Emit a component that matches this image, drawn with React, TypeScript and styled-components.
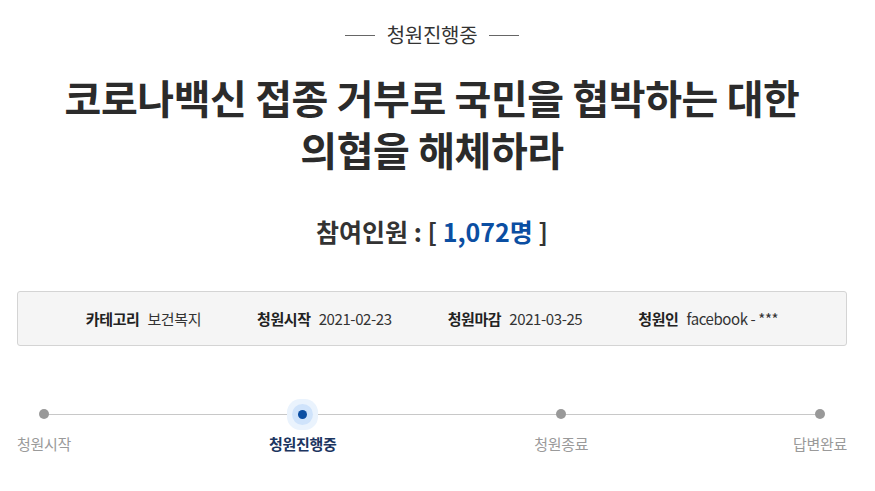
import React from "react";
import styled, { createGlobalStyle } from "styled-components";

const GlobalStyle = createGlobalStyle`
  body {
    margin: 0;
    background: #fff;
    font-family: "Noto Sans CJK KR", "Noto Sans", sans-serif;
    color: #333;
  }
`;

const Page = styled.div`
  width: 830px;
  margin-left: 17px;
  padding-top: 20px;
`;

const StatusLabel = styled.div`
  display: flex;
  justify-content: center;
  align-items: center;
  gap: 12px;
  font-size: 20px;
  line-height: 30px;
  letter-spacing: -0.3px;
  color: #333;

  &::before,
  &::after {
    content: "";
    width: 30px;
    height: 1px;
    background: #666;
  }
`;

const Title = styled.h1`
  margin: 21px 0 0;
  text-align: center;
  font-size: 40px;
  line-height: 52px;
  font-weight: 700;
  color: #2b2b2b;
  letter-spacing: -0.4px;
`;

const Count = styled.div`
  margin-top: 38px;
  text-align: center;
  font-size: 25px;
  line-height: 36px;
  font-weight: 700;
  color: #333;
`;

const CountNumber = styled.span`
  color: #0b4ea2;
`;

const InfoBox = styled.ul`
  margin: 42px 0 0;
  padding: 0;
  list-style: none;
  height: 55px;
  box-sizing: border-box;
  display: flex;
  justify-content: center;
  align-items: center;
  gap: 56px;
  background: #f5f5f5;
  border: 1px solid #d4d4d4;
  border-radius: 3px;
`;

const InfoItem = styled.li`
  display: flex;
  align-items: center;
  gap: 8px;
  font-size: 15px;
  letter-spacing: -0.4px;
  color: #333;
`;

const InfoLabel = styled.strong`
  font-weight: 700;
  color: #222;
`;

const Steps = styled.ol`
  position: relative;
  margin: 53px 0 0;
  padding: 0;
  list-style: none;
  display: flex;
  justify-content: space-between;

  &::before {
    content: "";
    position: absolute;
    top: 15px;
    left: 26px;
    right: 27px;
    height: 1px;
    background: #c8c8c8;
  }
`;

const Step = styled.li`
  width: 54px;
  display: flex;
  flex-direction: column;
  align-items: center;
  position: relative;
`;

const DotWrap = styled.div`
  width: 30px;
  height: 30px;
  display: flex;
  align-items: center;
  justify-content: center;
`;

const Dot = styled.span<{ $active?: boolean }>`
  width: ${(p) => (p.$active ? "9px" : "10px")};
  height: ${(p) => (p.$active ? "9px" : "10px")};
  border-radius: 50%;
  background: ${(p) => (p.$active ? "#0b4ea2" : "#999")};
  box-shadow: ${(p) =>
    p.$active ? "0 0 0 6px #cfe3fb, 0 0 0 11px #eaf3fd" : "none"};
`;

const StepLabel = styled.span<{ $active?: boolean }>`
  margin-top: 4px;
  white-space: nowrap;
  font-size: 15px;
  line-height: 22px;
  letter-spacing: -0.3px;
  font-weight: ${(p) => (p.$active ? 700 : 400)};
  color: ${(p) => (p.$active ? "#1c3560" : "#9a9a9a")};
`;

const info = [
  { label: "카테고리", value: "보건복지" },
  { label: "청원시작", value: "2021-02-23" },
  { label: "청원마감", value: "2021-03-25" },
  { label: "청원인", value: "facebook - ***" },
];

const steps = ["청원시작", "청원진행중", "청원종료", "답변완료"];
const current = 1;

const App = () => {
  return (
    <Page>
      <GlobalStyle />
      <StatusLabel>청원진행중</StatusLabel>
      <Title>
        코로나백신 접종 거부로 국민을 협박하는 대한
        <br />
        의협을 해체하라
      </Title>
      <Count>
        참여인원 : [ <CountNumber>1,072명</CountNumber> ]
      </Count>
      <InfoBox>
        {info.map((item) => (
          <InfoItem key={item.label}>
            <InfoLabel>{item.label}</InfoLabel>
            {item.value}
          </InfoItem>
        ))}
      </InfoBox>
      <Steps>
        {steps.map((name, i) => (
          <Step key={name}>
            <DotWrap>
              <Dot $active={i === current} />
            </DotWrap>
            <StepLabel $active={i === current}>{name}</StepLabel>
          </Step>
        ))}
      </Steps>
    </Page>
  );
};

export default App;
